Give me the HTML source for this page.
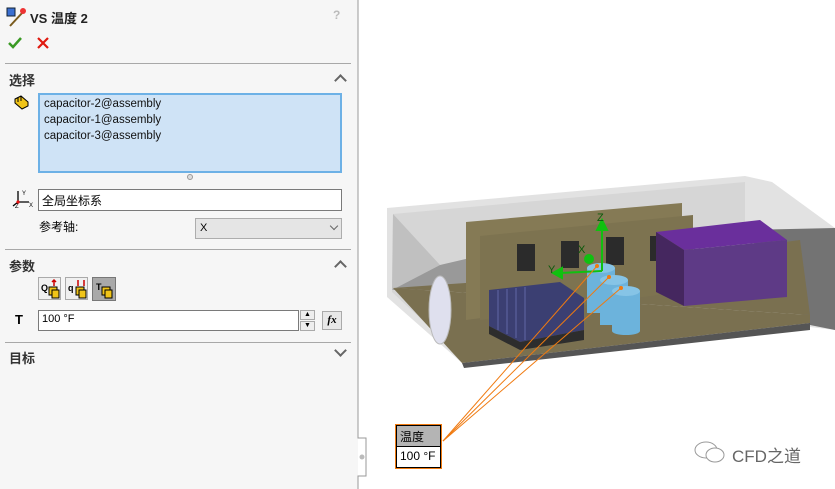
<!DOCTYPE html>
<html><head><meta charset="utf-8"><style>
*{margin:0;padding:0;box-sizing:border-box}
body{width:835px;height:489px;overflow:hidden;background:#fff;font-family:"Liberation Sans","Noto Sans CJK SC",sans-serif;font-size:12px;color:#000;position:relative}
#panel{position:absolute;left:0;top:0;width:358px;height:489px;background:#f6f6f6}
.a{position:absolute}
.hd{font-weight:bold;font-size:13px;color:#333}
.div{position:absolute;left:5px;width:346px;height:1px;background:#a8a8a8}
.chev{position:absolute;left:336px;width:9px;height:9px;border-left:2px solid #666;border-top:2px solid #666}
</style></head><body>
<div id="panel">
 <svg class="a" style="left:6px;top:7px" width="20" height="20"><rect x="1" y="1" width="8" height="8" fill="#3a6fd1" stroke="#123" /><line x1="4" y1="19" x2="17" y2="5" stroke="#7a5b1e" stroke-width="2"/><circle cx="17" cy="4" r="3" fill="#e33"/></svg>
 <div class="a hd" style="left:30px;top:8px;font-size:13px;color:#222">VS 温度 2</div>
 <div class="a" style="left:333px;top:8px;color:#bbb;font-weight:bold">?</div>
 <svg class="a" style="left:8px;top:36px" width="14" height="14"><path d="M1 7 L5 11 L13 2" stroke="#3a9a24" stroke-width="2.5" fill="none"/></svg>
 <svg class="a" style="left:37px;top:37px" width="12" height="12"><path d="M1 1 L11 11 M11 1 L1 11" stroke="#e0190f" stroke-width="2.2"/></svg>
 <div class="div" style="top:63px"></div>
 <div class="a hd" style="left:9px;top:70px">选择</div>
 <div class="chev" style="top:76px;transform:rotate(45deg)"></div>
 <svg class="a" style="left:13px;top:94px" width="18" height="16"><path d="M2 5 L8 2 L15 8 L15 12 L9 15 L2 9Z" fill="#f0c419" stroke="#000"/><path d="M5 3 L5 8 M8 2 L8 7" stroke="#000"/></svg>
 <div class="a" style="left:38px;top:93px;width:304px;height:80px;background:#cfe3f6;border:2px solid #6db1e6;padding:1px 4px;line-height:16px;font-size:11.5px;color:#111">capacitor-2@assembly<br>capacitor-1@assembly<br>capacitor-3@assembly</div>
 <div class="a" style="left:187px;top:174px;width:6px;height:6px;border-radius:50%;border:1px solid #999;background:#ddd"></div>
 <svg class="a" style="left:11px;top:189px" width="22" height="20"><path d="M7 2 V13 M7 13 H18 M7 13 L2 17" stroke="#000" stroke-width="1.3" fill="none"/><circle cx="7" cy="13" r="1.6" fill="#e11"/><text x="11" y="6" font-size="6" font-family="Liberation Sans">Y</text><text x="18" y="18" font-size="6" font-family="Liberation Sans">X</text><text x="4" y="19" font-size="6" font-family="Liberation Sans">Z</text></svg>
 <div class="a" style="left:38px;top:189px;width:304px;height:22px;background:#fff;border:1px solid #7a7a7a;padding:2px 3px;font-size:12px">全局坐标系</div>
 <div class="a" style="left:39px;top:218px;font-size:12px">参考轴:</div>
 <div class="a" style="left:195px;top:218px;width:147px;height:21px;background:#e5e5e5;border:1px solid #adadad;padding:3px 4px;font-size:11px">X</div>
 <div class="a" style="left:331px;top:223px;width:6px;height:6px;border-right:1px solid #666;border-bottom:1px solid #666;transform:rotate(45deg)"></div>
 <div class="div" style="top:249px"></div>
 <div class="a hd" style="left:9px;top:256px">参数</div>
 <div class="chev" style="top:262px;transform:rotate(45deg)"></div>
 <div class="a" style="left:38px;top:277px;width:23px;height:23px;border:1px solid #aaa;background:#f0f0f0"><svg width="22" height="22"><text x="2" y="13" font-size="9" font-weight="bold" font-family="Liberation Sans">Q</text><rect x="10" y="9" width="8" height="8" fill="#f0c419" stroke="#000"/><rect x="13" y="12" width="7" height="8" fill="#f0c419" stroke="#000"/><path d="M15 2 V8 M13 4 L15 2 L17 4" stroke="#c00" stroke-width="1.5" fill="none"/></svg></div>
 <div class="a" style="left:65px;top:277px;width:23px;height:23px;border:1px solid #aaa;background:#f0f0f0"><svg width="22" height="22"><text x="2" y="13" font-size="9" font-weight="bold" font-family="Liberation Sans">q</text><rect x="10" y="9" width="8" height="8" fill="#f0c419" stroke="#000"/><rect x="13" y="12" width="7" height="8" fill="#f0c419" stroke="#000"/><path d="M12 2 V8 M18 2 V8" stroke="#c00" stroke-width="1.5"/></svg></div>
 <div class="a" style="left:92px;top:277px;width:24px;height:24px;border:1px solid #777;background:#a9a9a9"><svg width="22" height="22"><text x="3" y="12" font-size="9" font-weight="bold" font-family="Liberation Sans">T</text><rect x="9" y="9" width="8" height="8" fill="#f0c419" stroke="#000"/><rect x="12" y="12" width="7" height="8" fill="#f0c419" stroke="#000"/></svg></div>
 <div class="a" style="left:15px;top:312px;font-weight:bold;font-size:13px">T</div>
 <div class="a" style="left:38px;top:310px;width:261px;height:21px;background:#fff;border:1px solid #7a7a7a;padding:2px 3px;font-size:11px">100 °F</div>
 <div class="a" style="left:300px;top:310px;width:15px;height:10px;border:1px solid #aaa;background:#eee;font-size:7px;text-align:center;line-height:8px">▲</div>
 <div class="a" style="left:300px;top:321px;width:15px;height:10px;border:1px solid #aaa;background:#eee;font-size:7px;text-align:center;line-height:8px">▼</div>
 <div class="a" style="left:322px;top:311px;width:20px;height:19px;border:1px solid #aaa;background:#e8e8e8;font-family:'Liberation Serif',serif;font-style:italic;font-weight:bold;font-size:11px;text-align:center;line-height:17px">fx</div>
 <div class="div" style="top:342px"></div>
 <div class="a hd" style="left:9px;top:348px">目标</div>
 <div class="chev" style="top:346px;transform:rotate(225deg)"></div>
</div>
<svg class="a" style="left:0;top:0" width="835" height="489">
 <path d="M358 0 V438 H366 V476 H358 V489" stroke="#999" fill="none"/>
 <circle cx="362" cy="457" r="2.5" fill="#bbb"/>
 <polygon points="387,208 745,176 772,182 835,228 835,330 810,327 462,363 387,297" fill="#e2e2e2"/>
 <polygon points="393,214 745,182 745,230 835,230 835,320 810,323 465,360 392,292" fill="#d6d6d6"/>
 <polygon points="745,230 835,228 835,330 810,325" fill="#737373"/>
 <polygon points="393,214 440,265 392,290" fill="#c0c0c0"/>
 <polygon points="440,265 470,258 470,290 392,290" fill="#999"/>
 <polygon points="393,288 810,315 810,323 462,363" fill="#7a7050"/>
 <polygon points="393,288 480,282 800,240 810,315" fill="#7a7050"/>
 <polygon points="462,363 810,323 810,330 464,368" fill="#555"/>
 <polygon points="466,222 682,203 682,230 693,215 693,290 466,320" fill="#857a55"/>
 <polygon points="480,236 693,215 693,290 480,320" fill="#7d7350"/>
 <rect x="517" y="244" width="18" height="27" fill="#2b2b2b"/>
 <rect x="561" y="241" width="18" height="27" fill="#2b2b2b"/>
 <rect x="606" y="237" width="18" height="28" fill="#2b2b2b"/>
 <rect x="650" y="236" width="10" height="25" fill="#2b2b2b"/>
 <polygon points="656,232 760,220 787,240 684,250" fill="#6a2f9c"/>
 <polygon points="656,232 684,250 684,306 656,292" fill="#45275f"/>
 <polygon points="684,250 787,240 787,297 684,306" fill="#5e3a86"/>
 <polygon points="489,290 560,282 584,298 584,330 520,342 489,326" fill="#3b3f72"/>
 <g stroke="#545a94" stroke-width="1.5"><line x1="498" y1="290" x2="498" y2="330"/><line x1="507" y1="289" x2="507" y2="334"/><line x1="516" y1="288" x2="516" y2="338"/><line x1="525" y1="287" x2="525" y2="340"/></g>
 <polygon points="489,326 520,342 584,330 584,340 520,350 489,334" fill="#2d2d2d"/>
 <g fill="#6cb3dc"><rect x="587" y="268" width="28" height="45"/><ellipse cx="601" cy="268" rx="14" ry="5" fill="#86c4e6"/>
 <rect x="600" y="280" width="28" height="45"/><ellipse cx="614" cy="280" rx="14" ry="5" fill="#86c4e6"/>
 <rect x="612" y="291" width="28" height="40"/><ellipse cx="626" cy="291" rx="14" ry="5" fill="#86c4e6"/><ellipse cx="626" cy="331" rx="14" ry="4"/></g>
 <ellipse cx="440" cy="310" rx="11" ry="34" fill="#dfe0ee" stroke="#bbb"/>
 <g stroke="#10c010" stroke-width="2" fill="#10c010"><line x1="602" y1="271" x2="602" y2="228"/><polygon points="597,230 607,230 602,220"/><line x1="602" y1="271" x2="560" y2="273"/><polygon points="562,268 562,278 553,273"/><circle cx="589" cy="259" r="4"/></g>
 <g font-family="Liberation Sans" font-size="11" fill="#0a5a0a"><text x="597" y="221">Z</text><text x="578" y="253">X</text><text x="548" y="273">Y</text></g>
 <g stroke="#f07a10" stroke-width="1" fill="none"><line x1="443" y1="441" x2="597" y2="266"/><line x1="443" y1="441" x2="609" y2="277"/><line x1="443" y1="441" x2="621" y2="288"/></g>
 <g fill="#f07a10"><circle cx="597" cy="266" r="2"/><circle cx="609" cy="277" r="2"/><circle cx="621" cy="288" r="2"/></g>
</svg>
<div class="a" style="left:395px;top:424px;width:47px;height:45px;border:1px solid #f07a10;background:#fff">
 <div style="border:1px solid #000;height:43px">
  <div style="background:#b4b4b4;height:21px;border-bottom:1px solid #000;padding:2px 3px;font-size:12px">温度</div>
  <div style="padding:2px 3px;font-size:12px">100 °F</div>
 </div>
</div>
<svg class="a" style="left:692px;top:438px" width="40" height="30"><ellipse cx="14" cy="12" rx="11" ry="8" fill="none" stroke="#999"/><ellipse cx="23" cy="17" rx="9" ry="7" fill="#fff" stroke="#999"/></svg>
<div class="a" style="left:732px;top:442px;font-size:17px;color:#666">CFD之道</div>
</body></html>
